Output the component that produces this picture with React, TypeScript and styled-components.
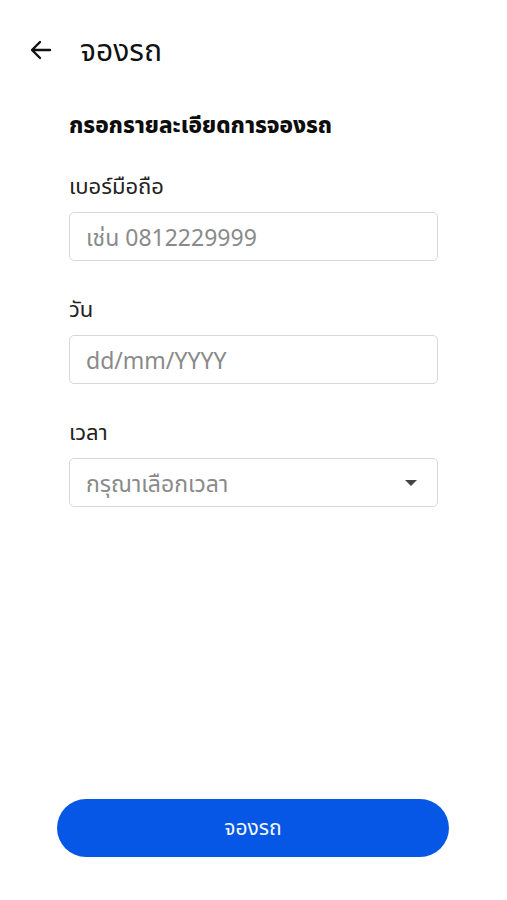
import React from "react";
import styled, { createGlobalStyle } from "styled-components";

const GlobalStyle = createGlobalStyle`
  html, body {
    margin: 0;
    padding: 0;
    background: #ffffff;
  }
  body {
    font-family: "Noto Sans", "Noto Sans Thai", "Noto Sans CJK SC", sans-serif;
    color: #111111;
  }
`;

const Page = styled.div`
  width: 507px;
  height: 900px;
  display: flex;
  flex-direction: column;
  box-sizing: border-box;
`;

const Header = styled.div`
  display: flex;
  align-items: center;
  height: 56px;
  margin-top: 22px;
  padding-left: 28px;
  gap: 26px;
`;

const BackButton = styled.button`
  border: none;
  background: none;
  padding: 0;
  width: 26px;
  height: 26px;
  display: flex;
  align-items: center;
  justify-content: center;
  cursor: pointer;
`;

const Title = styled.h1`
  margin: 0;
  font-size: 30px;
  line-height: 40px;
  font-weight: 400;
  color: #111111;
`;

const Form = styled.div`
  display: flex;
  flex-direction: column;
  padding: 0 69px;
  margin-top: 33px;
`;

const SectionTitle = styled.h2`
  margin: 0 0 32px;
  font-size: 22.5px;
  line-height: 28px;
  font-weight: 800;
  color: #0d0d0d;
`;

const Field = styled.div`
  display: flex;
  flex-direction: column;
  gap: 13px;
  margin-bottom: 33px;
`;

const Label = styled.label`
  font-size: 22px;
  line-height: 28px;
  color: #222222;
`;

const Box = styled.div`
  height: 49px;
  box-sizing: border-box;
  border: 1.5px solid #d8d8d8;
  border-radius: 5px;
  display: flex;
  align-items: center;
  justify-content: space-between;
  padding: 0 20px 0 16px;
`;

const Placeholder = styled.span`
  font-size: 23px;
  line-height: 30px;
  color: #8a8a8a;
`;

const Caret = styled.span`
  width: 0;
  height: 0;
  border-left: 6px solid transparent;
  border-right: 6px solid transparent;
  border-top: 6px solid #444444;
`;

const Spacer = styled.div`
  flex: 1;
`;

const Footer = styled.div`
  padding: 0 58px 43px 57px;
`;

const SubmitButton = styled.button`
  width: 100%;
  height: 58px;
  border: none;
  border-radius: 29px;
  background: #0757e6;
  color: #f4f7ff;
  font-family: inherit;
  font-size: 21px;
  cursor: pointer;
`;

const fields = [
  { label: "เบอร์มือถือ", placeholder: "เช่น 0812229999", select: false },
  { label: "วัน", placeholder: "dd/mm/YYYY", select: false },
  { label: "เวลา", placeholder: "กรุณาเลือกเวลา", select: true },
];

export default function App() {
  return (
    <Page>
      <GlobalStyle />
      <Header>
        <BackButton aria-label="back">
          <svg width="24" height="24" viewBox="0 0 24 24" fill="none">
            <path
              d="M21 12H3.5M11 4l-8 8 8 8"
              stroke="#111"
              strokeWidth="2.4"
              strokeLinecap="round"
              strokeLinejoin="round"
            />
          </svg>
        </BackButton>
        <Title>จองรถ</Title>
      </Header>
      <Form>
        <SectionTitle>กรอกรายละเอียดการจองรถ</SectionTitle>
        {fields.map((f) => (
          <Field key={f.label}>
            <Label>{f.label}</Label>
            <Box>
              <Placeholder>{f.placeholder}</Placeholder>
              {f.select && <Caret />}
            </Box>
          </Field>
        ))}
      </Form>
      <Spacer />
      <Footer>
        <SubmitButton>จองรถ</SubmitButton>
      </Footer>
    </Page>
  );
}
